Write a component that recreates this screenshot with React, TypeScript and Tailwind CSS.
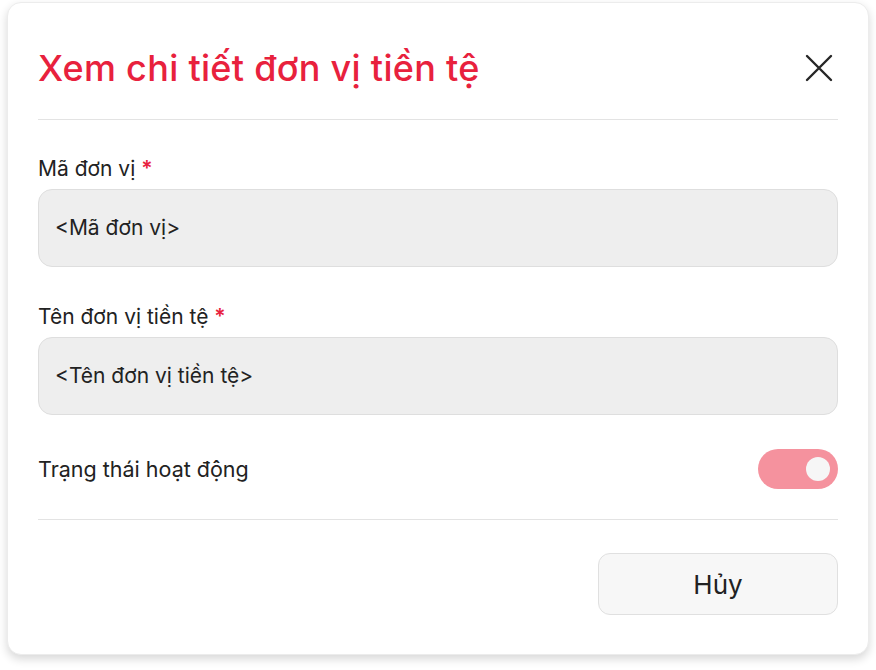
import { useState } from 'react';

function Field({ label, value }: { label: string; value: string }) {
  return (
    <div className="flex flex-col">
      <label className="text-[21px] leading-[25px] text-[#222222] mb-[8px]">
        {label} <span className="text-[#e8213d] font-semibold">*</span>
      </label>
      <div className="h-[78px] rounded-[14px] border border-[#dedede] bg-[#eeeeee] px-[16px] flex items-center text-[21px] text-[#222222]">
        {value}
      </div>
    </div>
  );
}

export default function App() {
  const [active, setActive] = useState(true);

  return (
    <div className="w-[876px] h-[670px] bg-white font-['Inter',sans-serif] pt-[2px] pl-[7px]">
      <div className="w-[862px] h-[653px] bg-white rounded-[14px] border border-[#ececec] shadow-[0_4px_10px_rgba(0,0,0,0.16)] px-[30px] flex flex-col">
        {/* Header */}
        <div className="pt-[44px] pb-[30px] border-b border-[#e3e3e3] flex items-center justify-between">
          <h1 className="text-[36px] leading-[42px] font-medium text-[#e8213d] tracking-[0.3px]">
            Xem chi tiết đơn vị tiền tệ
          </h1>
          <button className="w-[30px] h-[30px] flex items-center justify-center mr-[4px] text-[#262626]">
            <svg width="28" height="28" viewBox="0 0 28 28" fill="none" stroke="currentColor" strokeWidth="2.4" strokeLinecap="round">
              <path d="M2 2 L26 26 M26 2 L2 26" />
            </svg>
          </button>
        </div>

        {/* Body */}
        <div className="pt-[36px] flex flex-col gap-[37px]">
          <Field label="Mã đơn vị" value="<Mã đơn vị>" />
          <Field label="Tên đơn vị tiền tệ" value="<Tên đơn vị tiền tệ>" />
        </div>

        <div className="mt-[34px] pb-[30px] border-b border-[#e3e3e3] flex items-center justify-between">
          <span className="text-[21.5px] leading-[26px] text-[#222222]">Trạng thái hoạt động</span>
          <button
            onClick={() => setActive(!active)}
            className={`w-[80px] h-[40px] rounded-full flex items-center px-[8px] ${active ? 'bg-[#f5929e] justify-end' : 'bg-[#d9d9d9] justify-start'}`}
          >
            <span className="w-[24px] h-[24px] rounded-full bg-[#f6f6f6]" />
          </button>
        </div>

        {/* Footer */}
        <div className="pt-[33px] flex justify-end">
          <button className="w-[240px] h-[62px] rounded-[12px] border border-[#e0e0e0] bg-[#f7f7f7] text-[26px] text-[#222222]">
            Hủy
          </button>
        </div>
      </div>
    </div>
  );
}
